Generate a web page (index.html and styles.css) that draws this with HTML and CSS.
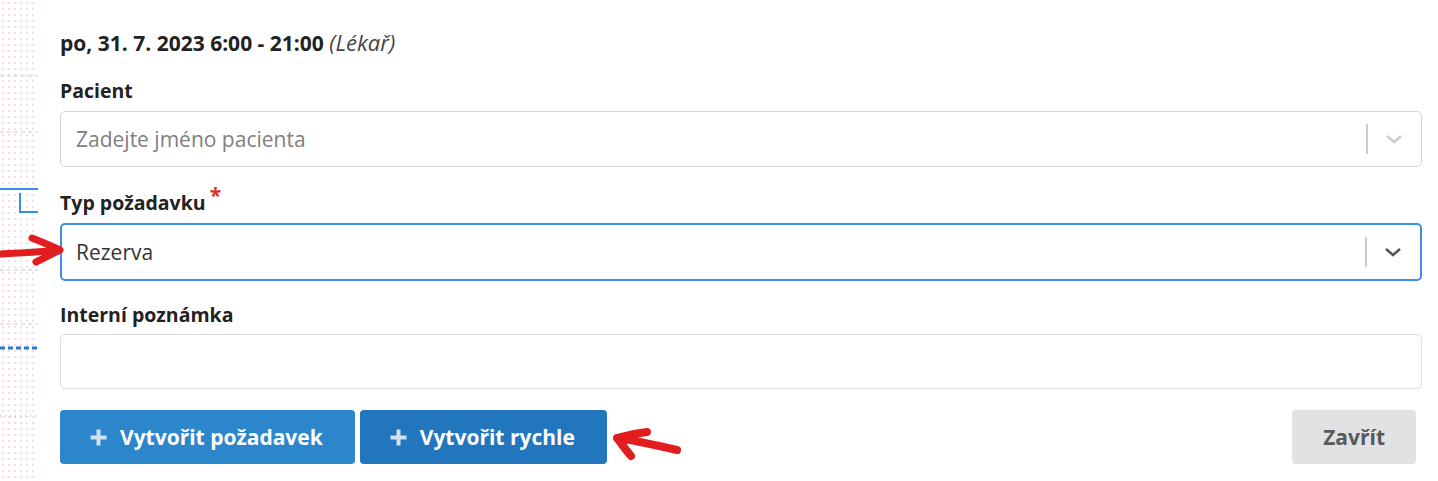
FILE: index.html
```html
<!DOCTYPE html>
<html lang="cs">
<head>
  <meta charset="UTF-8" />
  <meta name="viewport" content="width=device-width, initial-scale=1.0"/>
  <title>Nový požadavek</title>
  <link rel="stylesheet" href="styles.css">
</head>
<body>
  <div class="page">
    <div class="side">
      <svg width="38" height="481" viewBox="0 0 38 481">
        <line x1="0" y1="76" x2="38" y2="76" stroke="#ccc" stroke-dasharray="4 3" />
        <line x1="0" y1="132" x2="38" y2="132" stroke="#ccc" stroke-dasharray="4 3" />
        <line x1="0" y1="189" x2="38" y2="189" stroke="#3b8de6" stroke-width="2" />
        <path d="M20 193 V212 H38" fill="none" stroke="#3b8de6" stroke-width="2" />
        <line x1="0" y1="270" x2="38" y2="270" stroke="#ccc" stroke-dasharray="4 3" />
        <line x1="0" y1="324" x2="38" y2="324" stroke="#ccc" stroke-dasharray="4 3" />
        <line x1="0" y1="348" x2="38" y2="348" stroke="#2a7ac6" stroke-width="3" stroke-dasharray="5 3" />
        <line x1="0" y1="416" x2="38" y2="416" stroke="#99a" stroke-dasharray="1 4" />
      </svg>
    </div>

    <div class="form">
      <div class="title"><strong>po, 31. 7. 2023 6:00 - 21:00</strong> <em>(Lékař)</em></div>

      <div class="field">
        <label class="label">Pacient</label>
        <div class="select">
          <span class="placeholder">Zadejte jméno pacienta</span>
          <span class="sep"></span>
          <svg class="chev" width="18" height="10" viewBox="0 0 18 10"><path d="M2 2 L9 8 L16 2" fill="none" stroke="#ccc" stroke-width="2.5"/></svg>
        </div>
      </div>

      <div class="field">
        <label class="label">Typ požadavku<span class="req">*</span></label>
        <div class="select focused">
          <span class="value">Rezerva</span>
          <span class="sep"></span>
          <svg class="chev" width="18" height="10" viewBox="0 0 18 10"><path d="M2 2 L9 8 L16 2" fill="none" stroke="#555" stroke-width="2.5"/></svg>
        </div>
      </div>

      <div class="field field-note">
        <label class="label">Interní poznámka</label>
        <div class="textarea"></div>
      </div>

      <div class="actions">
        <button class="btn btn-primary">
          <svg width="17" height="17" viewBox="0 0 17 17"><path d="M8.5 0.5 V16.5 M0.5 8.5 H16.5" stroke="#cfe1f2" stroke-width="4"/></svg>
          Vytvořit požadavek
        </button>
        <button class="btn btn-dark">
          <svg width="17" height="17" viewBox="0 0 17 17"><path d="M8.5 0.5 V16.5 M0.5 8.5 H16.5" stroke="#cfe1f2" stroke-width="4"/></svg>
          Vytvořit rychle
        </button>
        <button class="btn btn-close">Zavřít</button>
      </div>
    </div>
  </div>

  <svg class="arrow arrow-left" width="70" height="34" viewBox="0 0 70 34">
    <path d="M1 20 C20 19 40 18 58 16 M32 4 C42 8 52 12 60 16 C52 20 44 24 36 28" fill="none" stroke="#e21d1d" stroke-width="7" stroke-linecap="round" stroke-linejoin="round"/>
  </svg>
  <svg class="arrow arrow-right" width="80" height="40" viewBox="0 0 80 40">
    <path d="M6 13 C22 15 44 20 66 25 M36 7 C26 8 16 10 6 13 C10 18 14 24 20 31" fill="none" stroke="#e21d1d" stroke-width="8" stroke-linecap="round" stroke-linejoin="round"/>
  </svg>
</body>
</html>
```

FILE: styles.css
```css
body {
  margin: 0;
  background: #fff;
  font-family: "Open Sans", "Noto Sans", sans-serif;
  color: #222;
  position: relative;
}
.page {
  display: flex;
  height: 481px;
}
.side {
  width: 38px;
  flex: none;
  background-image: radial-gradient(#f6dcf2 1px, transparent 1px);
  background-size: 6px 6px;
}
.side svg {
  display: block;
}
.form {
  flex: 1;
  padding: 30px 16px 0 22px;
  display: flex;
  flex-direction: column;
}
.title {
  font-size: 21px;
  line-height: 24px;
  color: #222;
}
.title em {
  color: #444;
  font-size: 22px;
}
.field {
  margin-top: 24px;
  display: flex;
  flex-direction: column;
}
.field:first-of-type {
  margin-top: 24px;
}
.label {
  font-size: 19.5px;
  line-height: 24px;
  height: 24px;
  font-weight: 700;
  color: #222;
  margin-bottom: 8px;
  position: relative;
}
.req {
  color: #d9302c;
  font-size: 21px;
  line-height: 0;
  margin-left: 4px;
  position: relative;
  top: -7px;
}
.select {
  height: 54px;
  border: 1px solid #d4d4d4;
  border-radius: 5px;
  display: flex;
  align-items: center;
  padding-left: 15px;
  font-size: 21px;
}
.select.focused {
  border: 2px solid #3d8fe8;
  height: 54px;
  padding-left: 14px;
}
.placeholder {
  color: #808080;
  flex: 1;
}
.value {
  color: #333;
  flex: 1;
}
.sep {
  width: 2px;
  height: 30px;
  background: #ccc;
}
.chev {
  margin: 0 18px 0 17px;
}
.field-note {
  margin-top: 22px;
}
.field-note .label {
  margin-bottom: 7px;
}
.textarea {
  height: 53px;
  border: 1px solid #ddd;
  border-radius: 5px;
}
.actions {
  margin-top: 21px;
  display: flex;
  gap: 5px;
  padding-right: 6px;
}
.btn {
  height: 54px;
  border: none;
  border-radius: 4px;
  font-family: inherit;
  font-size: 21px;
  font-weight: 700;
  color: #fff;
  display: flex;
  align-items: center;
  gap: 13px;
  padding: 0 32px 0 30px;
}
.btn-primary {
  background: #2b86cc;
}
.btn-dark {
  background: #2176bd;
}
.btn-close {
  margin-left: auto;
  background: #e1e2e4;
  color: #595959;
  padding: 0 31px;
}
.arrow {
  position: absolute;
}
.arrow-left {
  left: 0;
  top: 234px;
}
.arrow-right {
  left: 611px;
  top: 425px;
}
```
